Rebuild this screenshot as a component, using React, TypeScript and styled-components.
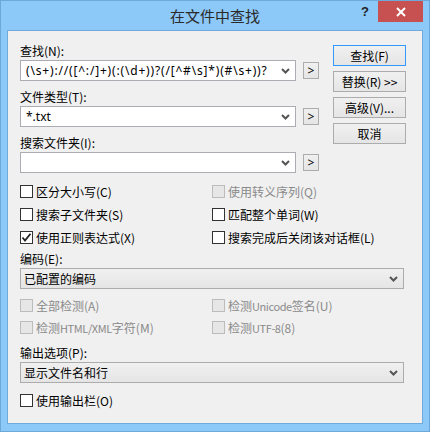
import React from "react";
import styled, { createGlobalStyle, css } from "styled-components";

const Global = createGlobalStyle`
  html, body { margin: 0; padding: 0; background: #8cc8f8; }
  body {
    font-family: "Noto Sans CJK SC", "Noto Sans", sans-serif;
    font-size: 12px;
    color: #000;
  }
  * { box-sizing: border-box; }
`;

const Window = styled.div`
  width: 430px;
  height: 432px;
  border: 1px solid #6ea7d9;
  background: #8cc8f8;
  display: flex;
  flex-direction: column;
  padding: 0 6px 7px;
`;

const TitleBar = styled.div`
  height: 29px;
  display: grid;
  grid-template-columns: 1fr auto 1fr;
  align-items: start;
`;

const Title = styled.div`
  grid-column: 2;
  font-family: "Noto Sans CJK SC", sans-serif;
  font-size: 15px;
  line-height: 29px;
  color: #2a2a2a;
  white-space: nowrap;
`;

const Caption = styled.div`
  grid-column: 3;
  justify-self: end;
  display: flex;
  align-items: flex-start;
`;

const Help = styled.div`
  font-family: "Liberation Sans", sans-serif;
  font-weight: bold;
  font-size: 13px;
  line-height: 22px;
  color: #222;
  margin-right: 9px;
`;

const Close = styled.div`
  width: 45px;
  height: 21px;
  background: #c75050;
  display: flex;
  align-items: center;
  justify-content: center;
`;

const Client = styled.div`
  flex: 1;
  border: 1px solid #70a9dc;
  background: #f0f0f0;
  padding: 12px 16px 0 12px;
  display: flex;
  flex-direction: column;
`;

const Top = styled.div`
  display: flex;
  gap: 14px;
`;

const LeftCol = styled.div`
  width: 299px;
  display: flex;
  flex-direction: column;
  gap: 8px;
`;

const RightCol = styled.div`
  width: 73px;
  margin-top: 2px;
  display: flex;
  flex-direction: column;
  gap: 5px;
`;

const Field = styled.div`
  display: flex;
  flex-direction: column;
  gap: 1px;
`;

const Label = styled.div<{ $mt?: number }>`
  height: 16px;
  line-height: 16px;
  white-space: nowrap;
  margin-top: ${(p) => p.$mt ?? 0}px;
`;

const ComboRow = styled.div`
  display: flex;
  align-items: center;
  gap: 7px;
`;

const Combo = styled.div`
  width: 277px;
  height: 21px;
  border: 1px solid #abadb3;
  background: #fff;
  display: flex;
  align-items: center;
  padding: 0 5px 0 5px;
`;

const ComboText = styled.div<{ $spacing?: number }>`
  flex: 1;
  white-space: nowrap;
  overflow: hidden;
  line-height: 19px;
  font-family: "Noto Sans", "Noto Sans CJK SC", sans-serif;
  letter-spacing: ${(p) => p.$spacing ?? 0}px;
`;

const Chevron = styled.svg`
  flex: none;
  margin-left: 4px;
`;

const BrowseButton = styled.div`
  width: 16px;
  height: 17px;
  border: 1px solid #acacac;
  background: linear-gradient(#f0f0f0, #e5e5e5);
  display: flex;
  align-items: center;
  justify-content: center;
  font-family: "Noto Sans", sans-serif;
  font-size: 12px;
  line-height: 15px;
  color: #000;
`;

const Button = styled.div<{ $default?: boolean }>`
  height: 21px;
  border: 1px solid #acacac;
  background: linear-gradient(#f0f0f0, #e5e5e5);
  display: flex;
  align-items: center;
  justify-content: center;
  white-space: nowrap;
  line-height: 19px;
  ${(p) =>
    p.$default &&
    css`
      border-color: #3399ff;
    `}
`;

const CheckGrid = styled.div<{ $row: number; $mt: number }>`
  display: grid;
  grid-template-columns: 192px 1fr;
  grid-auto-rows: ${(p) => p.$row}px;
  margin-top: ${(p) => p.$mt}px;
`;

const CheckItem = styled.div<{ $disabled?: boolean }>`
  display: flex;
  align-items: center;
  gap: 3px;
  white-space: nowrap;
  color: ${(p) => (p.$disabled ? "#8a8a8a" : "#000")};
`;

const Latin = styled.span`
  font-size: 11px;
  letter-spacing: -0.4px;
`;

const Box = styled.div<{ $disabled?: boolean }>`
  width: 13px;
  height: 13px;
  flex: none;
  border: 1px solid ${(p) => (p.$disabled ? "#bcbcbc" : "#333")};
  background: ${(p) => (p.$disabled ? "#e6e6e6" : "#fff")};
  display: flex;
  align-items: center;
  justify-content: center;
`;

const Select = styled.div`
  width: 384px;
  height: 21px;
  border: 1px solid #acacac;
  background: linear-gradient(#f0f0f0, #e5e5e5);
  display: flex;
  align-items: center;
  padding: 0 5px 0 3px;
`;

const SelectText = styled.div`
  flex: 1;
  white-space: nowrap;
  line-height: 19px;
`;

const ChevronIcon = () => (
  <Chevron width="9" height="6" viewBox="0 0 9 6">
    <path d="M1 1 L4.5 4.5 L8 1" fill="none" stroke="#555" strokeWidth="2" />
  </Chevron>
);

type CB = { label: React.ReactNode; checked?: boolean; disabled?: boolean };

const Check = ({ label, checked, disabled }: CB) => (
  <CheckItem $disabled={disabled}>
    <Box $disabled={disabled}>
      {checked && (
        <svg width="11" height="11" viewBox="0 0 11 11">
          <path d="M1.5 5.5 L4 8.5 L9.5 1.8" fill="none" stroke="#222" strokeWidth="1.8" />
        </svg>
      )}
    </Box>
    <span>{label}</span>
  </CheckItem>
);

export default function App() {
  return (
    <>
      <Global />
      <Window>
        <TitleBar>
          <Title>在文件中查找</Title>
          <Caption>
            <Help>?</Help>
            <Close>
              <svg width="10" height="10" viewBox="0 0 10 10">
                <path d="M1 1 L9 9 M9 1 L1 9" stroke="#fff" strokeWidth="2" />
              </svg>
            </Close>
          </Caption>
        </TitleBar>
        <Client>
          <Top>
            <LeftCol>
              <Field>
                <Label>查找(N):</Label>
                <ComboRow>
                  <Combo>
                    <ComboText $spacing={0.82}>{"(\\s+)://([^:/]+)(:(\\d+))?(/[^#\\s]*)(#\\s+))?"}</ComboText>
                    <ChevronIcon />
                  </Combo>
                  <BrowseButton>&gt;</BrowseButton>
                </ComboRow>
              </Field>
              <Field>
                <Label>文件类型(T):</Label>
                <ComboRow>
                  <Combo>
                    <ComboText>*.txt</ComboText>
                    <ChevronIcon />
                  </Combo>
                  <BrowseButton>&gt;</BrowseButton>
                </ComboRow>
              </Field>
              <Field>
                <Label>搜索文件夹(I):</Label>
                <ComboRow>
                  <Combo>
                    <ComboText></ComboText>
                    <ChevronIcon />
                  </Combo>
                  <BrowseButton>&gt;</BrowseButton>
                </ComboRow>
              </Field>
            </LeftCol>
            <RightCol>
              <Button $default>查找(F)</Button>
              <Button>替换(R) &gt;&gt;</Button>
              <Button>高级(V)...</Button>
              <Button>取消</Button>
            </RightCol>
          </Top>

          <CheckGrid $row={23} $mt={7}>
            <Check label="区分大小写(C)" />
            <Check label="使用转义序列(Q)" disabled />
            <Check label="搜索子文件夹(S)" />
            <Check label="匹配整个单词(W)" />
            <Check label="使用正则表达式(X)" checked />
            <Check label="搜索完成后关闭该对话框(L)" />
          </CheckGrid>

          <Field>
            <Label $mt={2}>编码(E):</Label>
            <Select>
              <SelectText>已配置的编码</SelectText>
              <ChevronIcon />
            </Select>
          </Field>

          <CheckGrid $row={22} $mt={5}>
            <Check label="全部检测(A)" disabled />
            <Check label={<>检测<Latin>Unicode</Latin>签名(U)</>} disabled />
            <Check label={<>检测<Latin>HTML/XML</Latin>字符(M)</>} disabled />
            <Check label={<>检测<Latin>UTF-8</Latin>(8)</>} disabled />
          </CheckGrid>

          <Field>
            <Label $mt={7}>输出选项(P):</Label>
            <Select>
              <SelectText>显示文件名和行</SelectText>
              <ChevronIcon />
            </Select>
          </Field>

          <CheckGrid $row={22} $mt={6}>
            <Check label="使用输出栏(O)" />
          </CheckGrid>
        </Client>
      </Window>
    </>
  );
}
